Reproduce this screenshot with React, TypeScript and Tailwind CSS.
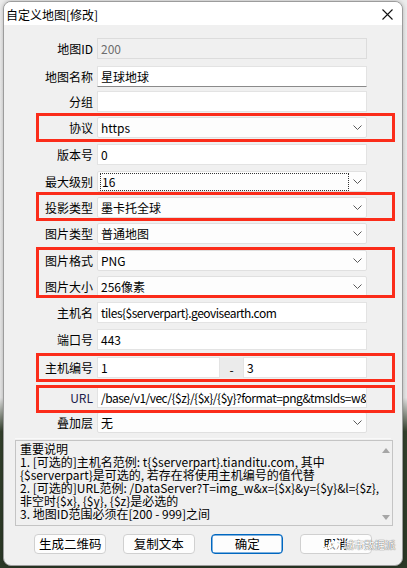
import React from 'react';

type Kind = 'disabled' | 'input' | 'inputHover' | 'inputTight' | 'select' | 'focusSelect' | 'range';
type Row = { label: string; kind: Kind; value: string; mt: string };

const rows: Row[] = [
  { label: '地图ID', kind: 'disabled', value: '200', mt: 'mt-0' },
  { label: '地图名称', kind: 'inputHover', value: '星球地球', mt: 'mt-[7px]' },
  { label: '分组', kind: 'input', value: '', mt: 'mt-[4px]' },
  { label: '协议', kind: 'select', value: 'https', mt: 'mt-[5px]' },
  { label: '版本号', kind: 'input', value: '0', mt: 'mt-[6px]' },
  { label: '最大级别', kind: 'focusSelect', value: '16', mt: 'mt-[6px]' },
  { label: '投影类型', kind: 'select', value: '墨卡托全球', mt: 'mt-[5px]' },
  { label: '图片类型', kind: 'select', value: '普通地图', mt: 'mt-[5px]' },
  { label: '图片格式', kind: 'select', value: 'PNG', mt: 'mt-[6px]' },
  { label: '图片大小', kind: 'select', value: '256像素', mt: 'mt-[5px]' },
  { label: '主机名', kind: 'inputTight', value: 'tiles{$serverpart}.geovisearth.com', mt: 'mt-[5px]' },
  { label: '端口号', kind: 'input', value: '443', mt: 'mt-[6px]' },
  { label: '主机编号', kind: 'range', value: '', mt: 'mt-[7px]' },
  { label: 'URL', kind: 'inputTight', value: '/base/v1/vec/{$z}/{$x}/{$y}?format=png&tmsIds=w&', mt: 'mt-[9px]' },
  { label: '叠加层', kind: 'select', value: '无', mt: 'mt-[4px]' },
];

const Chevron = () => (
  <svg width="9" height="5" viewBox="0 0 9 5" className="shrink-0">
    <path d="M0.5 0.5 L4.5 4.5 L8.5 0.5" fill="none" stroke="#5a5a5a" strokeWidth="1" />
  </svg>
);

function Field({ kind, value }: { kind: Kind; value: string }) {
  if (kind === 'disabled') {
    return (
      <div className="flex h-full w-full items-center border border-[#dcdcdc] bg-[#f0f0f0] pl-[3px] text-[#6d6d6d]">
        {value}
      </div>
    );
  }
  if (kind === 'input' || kind === 'inputHover' || kind === 'inputTight') {
    const cls =
      kind === 'inputHover'
        ? 'flex h-full w-full items-center overflow-hidden whitespace-nowrap border border-[#e3e3e3] border-b-[#8a8a8a] bg-white pl-[3px] text-black'
        : kind === 'inputTight'
          ? 'flex h-full w-full items-center overflow-hidden whitespace-nowrap border border-[#e3e3e3] bg-white pl-[3px] text-black tracking-[-0.5px]'
          : 'flex h-full w-full items-center overflow-hidden whitespace-nowrap border border-[#e3e3e3] bg-white pl-[3px] text-black';
    return <div className={cls}>{value}</div>;
  }
  if (kind === 'select' || kind === 'focusSelect') {
    return (
      <div className="flex h-full w-full items-center justify-between rounded-[2px] border border-[#e0e0e0] bg-[#fdfdfd] pl-[2px] pr-[4px] text-black">
        {kind === 'focusSelect' ? (
          <div className="flex h-[18px] w-[249px] items-center border border-dotted border-[#333] pl-[1px]">{value}</div>
        ) : (
          <span className="pl-[1px]">{value}</span>
        )}
        <Chevron />
      </div>
    );
  }
  return (
    <div className="flex h-full w-full">
      <div className="flex h-full w-[123px] items-center border border-[#e3e3e3] bg-white pl-[3px]">1</div>
      <div className="flex h-full w-[23px] items-center justify-center bg-[#ebebeb] pt-[5px]">-</div>
      <div className="flex h-full w-[124px] items-center border border-[#e3e3e3] bg-white pl-[3px]">3</div>
    </div>
  );
}

const notes = [
  '重要说明',
  '1. [可选的]主机名范例: t{$serverpart}.tianditu.com, 其中',
  '{$serverpart}是可选的, 若存在将使用主机编号的值代替',
  '2. [可选的]URL范例: /DataServer?T=img_w&x={$x}&y={$y}&l={$z},',
  '非空时{$x}, {$y}, {$z}是必选的',
  '3. 地图ID范围必须在[200 - 999]之间',
];

const redBoxes = [
  'left-[36px] top-[113px] h-[29px]',
  'left-[36px] top-[192px] h-[29px]',
  'left-[36px] top-[247px] h-[51px]',
  'left-[36px] top-[353px] h-[29px]',
  'left-[36px] top-[385px] h-[28px]',
];

export default function App() {
  return (
    <div className="relative h-[568px] w-[407px] overflow-hidden bg-[linear-gradient(to_bottom,#ececec_0%,#e6e6e6_70%,#33402c_76%,#2b3826_100%)] pl-[3px] pt-[1px] text-[12px] leading-[14px] [font-family:'Noto_Sans_CJK_SC',sans-serif]">
      <div className="flex h-[565px] w-[400px] flex-col overflow-hidden rounded-[8px] border border-[#9c9c9c] bg-[#f0f0f0] shadow-[0_0_4px_rgba(0,0,0,0.25)]">
        {/* Title bar */}
        <div className="flex h-[23px] shrink-0 items-center justify-between bg-white pl-[2px] pr-[9px] pt-[2px] text-black">
          <span className="text-[12px]">自定义地图[修改]</span>
          <svg width="11" height="11" viewBox="0 0 11 11">
            <path d="M0.5 0.5 L10.5 10.5 M10.5 0.5 L0.5 10.5" stroke="#111" strokeWidth="1.1" fill="none" />
          </svg>
        </div>

        {/* Form */}
        <div className="flex flex-col pt-[13px] text-black">
          {rows.map((r) => (
            <div key={r.label} className={`flex h-[21px] items-center ${r.mt}`}>
              <div className={r.label === 'URL' ? 'w-[89px] text-right text-[#1b1b4a]' : 'w-[89px] text-right'}>{r.label}</div>
              <div className="ml-[4px] h-full w-[270px]">
                <Field kind={r.kind} value={r.value} />
              </div>
            </div>
          ))}
        </div>
        <div className="mx-[11px] mt-[5px] h-px bg-[#f9f9f9]" />

        {/* Notes */}
        <div className="ml-[11px] mt-[1px] flex h-[86px] w-[378px] border border-[#c4c4c4] bg-[#f0f0f0]">
          <div className="flex-1 whitespace-pre pl-[4px] pt-[1px] text-[12px] leading-[13px] text-black">
            {notes.map((n) => (
              <div key={n}>{n}</div>
            ))}
          </div>
          <div className="flex w-[16px] flex-col items-center justify-between pb-[5px] pt-[7px]">
            <svg width="8" height="5" viewBox="0 0 8 5">
              <path d="M4 0 L8 5 L0 5 Z" fill="#a6a6a6" />
            </svg>
            <svg width="8" height="5" viewBox="0 0 8 5">
              <path d="M0 0 L8 0 L4 5 Z" fill="#a6a6a6" />
            </svg>
          </div>
        </div>

        {/* Buttons */}
        <div className="mt-[8px] flex justify-center gap-[16.5px]">
          {['生成二维码', '复制文本', '确定', '取消'].map((b) => (
            <div
              key={b}
              className={
                b === '确定'
                  ? 'flex h-[20px] w-[72px] items-center justify-center rounded-[4px] border border-[#0067c0] bg-[#fdfdfd] text-[12.5px] text-black shadow-[inset_0_0_0_0.5px_#0067c0]'
                  : 'flex h-[20px] w-[72px] items-center justify-center rounded-[4px] border border-[#d0d0d0] bg-[#fdfdfd] text-[12.5px] text-black'
              }
            >
              {b}
            </div>
          ))}
        </div>
      </div>

      {/* Annotation boxes */}
      {redBoxes.map((c) => (
        <div key={c} className={`absolute w-[359px] border-[3px] border-[#fb2c1a] ${c}`} />
      ))}

      {/* Watermark */}
      <div className="absolute left-[321px] top-[537px] flex items-center gap-[2px]">
        <svg width="20" height="15" viewBox="0 0 20 15">
          <ellipse cx="7" cy="6" rx="6" ry="5" fill="none" stroke="#ffffff" strokeWidth="1.3" />
          <ellipse cx="13" cy="9.5" rx="5.5" ry="4.5" fill="rgba(255,255,255,0.5)" stroke="#ffffff" strokeWidth="1.3" />
        </svg>
        <span className="text-[10.5px] leading-[12px] text-white [text-shadow:0_0_1px_#666,0_0_1px_#666]">城市数据派</span>
      </div>
    </div>
  );
}
